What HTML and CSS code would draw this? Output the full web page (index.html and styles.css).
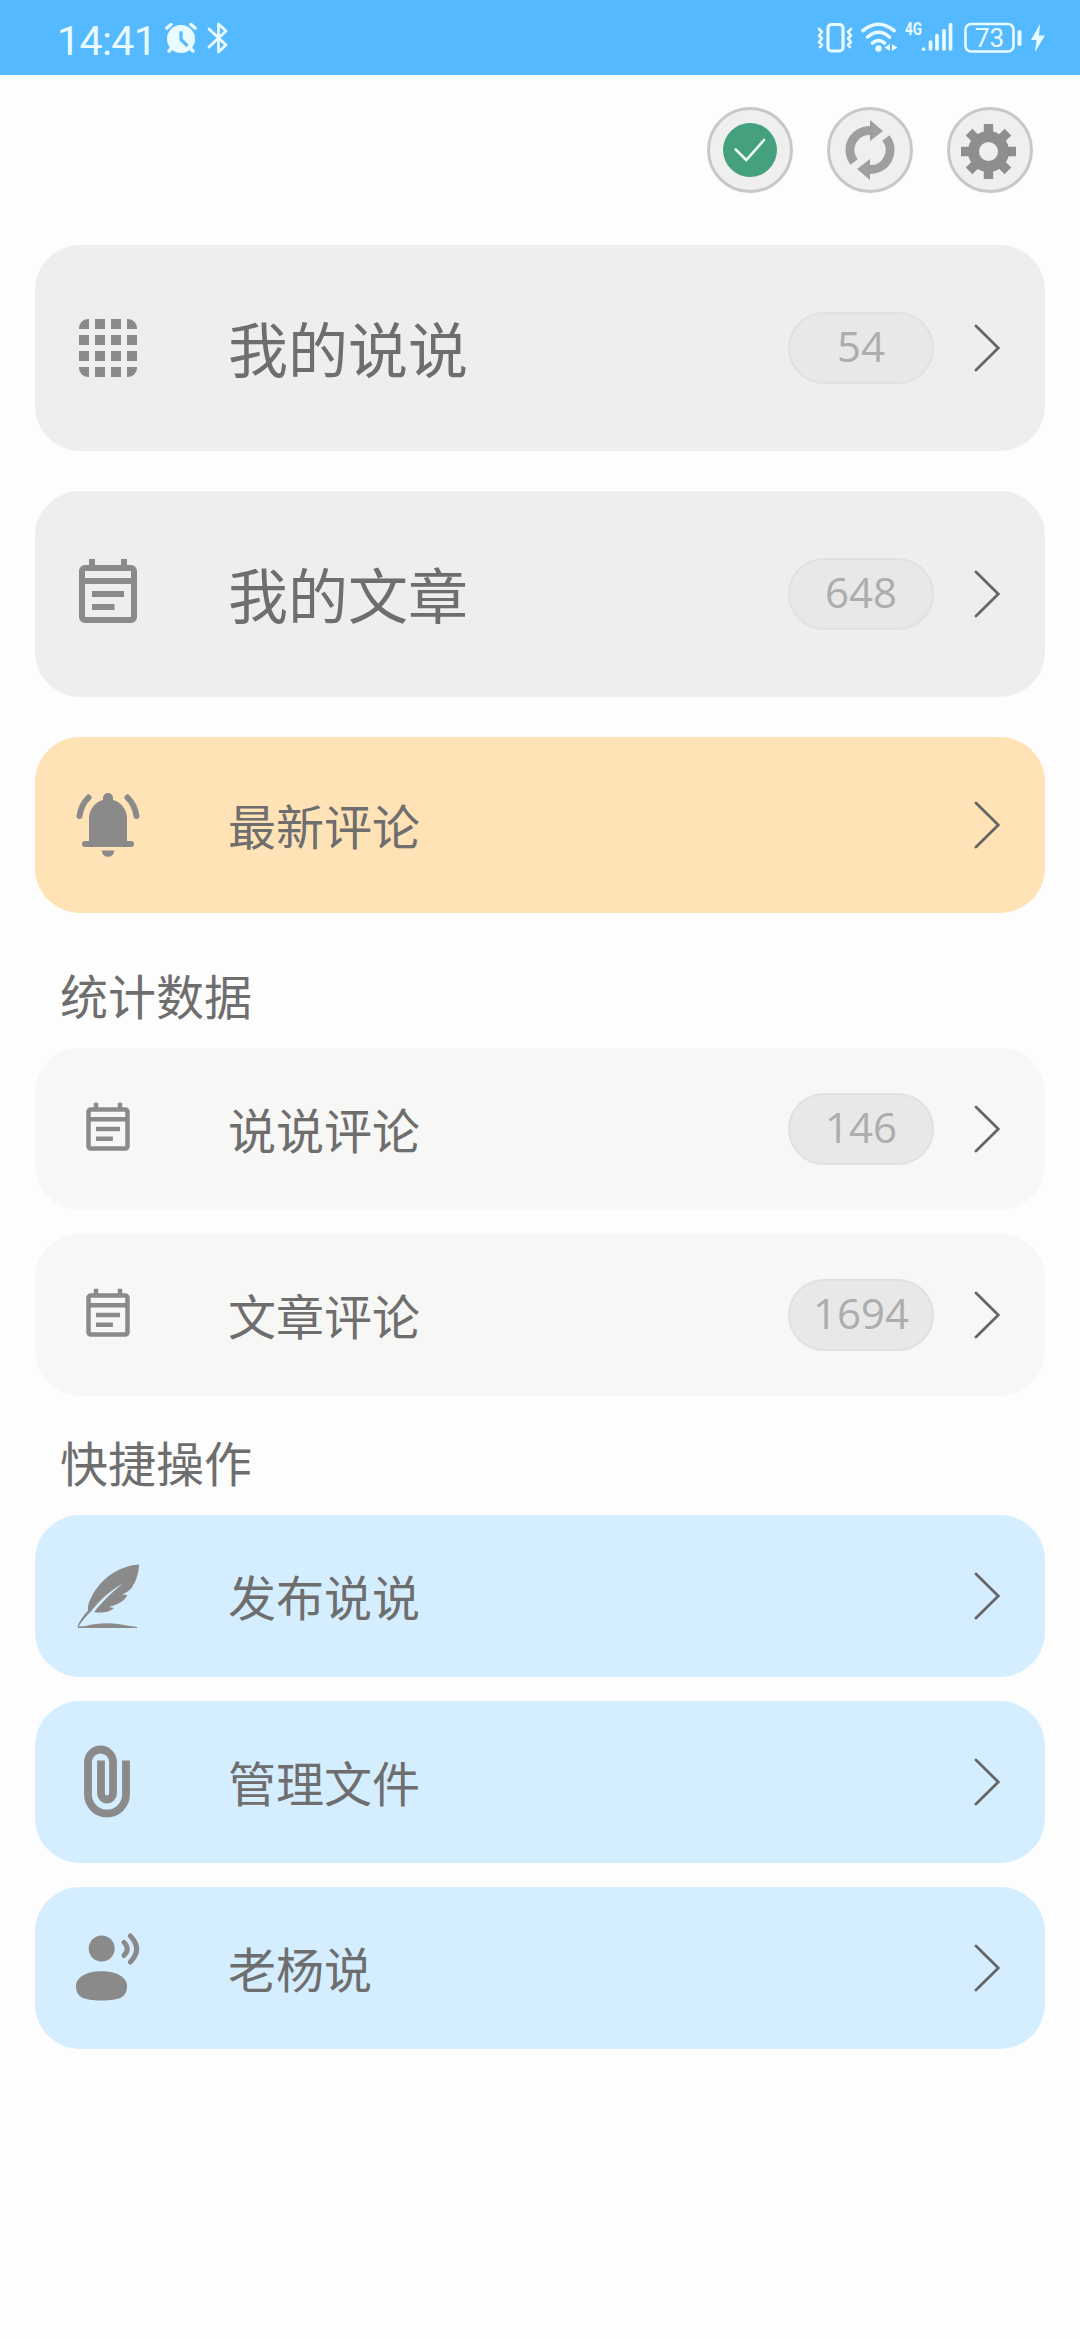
FILE: index.html
```html
<!DOCTYPE html>
<html lang="zh-CN">
    <head>
        <meta charset="UTF-8">
        <title>我的说说</title>
        <link rel="stylesheet" href="styles.css">
    </head>

    <body>
        <!-- shared icons -->
        <svg class="defs" width="0" height="0">
            <symbol id="note" viewBox="0 0 64 64" overflow="visible">
                <rect x="6" y="6" width="52" height="52" rx="3" fill="none" stroke="currentColor" stroke-width="6"/>
                <path d="M13 -3h6v8h-6zM45 -3h6v8h-6zM6 16h52v6H6zM16 29h32v6H16zM16 42h22.5v6H16z" fill="currentColor"/>
            </symbol>
            <symbol id="arrow" viewBox="0 0 26 48">
                <path d="M2 2L24.3 24L2 46" fill="none" stroke="currentColor" stroke-width="2.8" stroke-linecap="round"/>
            </symbol>
        </svg>

        <div class="status-bar">
            <span class="time">14:41</span>
            <svg class="alarm" width="32" height="32" viewBox="0 0 32 32">
                <circle cx="16" cy="17" r="14" fill="currentColor"/>
                <path d="M2 6L6 2.5M30 6L26 2.5M6 27L4 29M26 27L28 29" stroke="currentColor" stroke-width="3.5" stroke-linecap="round"/>
                <path d="M16 10.5V17.5L21.5 23" fill="none" stroke="#55b9ff" stroke-width="3.2" stroke-linecap="round"/>
            </svg>
            <svg class="bluetooth" width="22" height="34" viewBox="0 0 22 34">
                <path d="M2 8L19 24L11.5 31V3L19 10L2 26" fill="none" stroke="currentColor" stroke-width="2.8" stroke-linejoin="round" stroke-linecap="round"/>
            </svg>

            <div class="status-right">
                <svg width="36" height="32" viewBox="0 0 36 32">
                    <rect x="11" y="2.5" width="15" height="26.5" rx="3.5" fill="none" stroke="currentColor" stroke-width="3.2"/>
                    <path d="M2 7l3 3-3 3.5 3 3-3 3.5 3 3-2 2M34 7l-3 3 3 3.5-3 3 3 3.5-3 3 2 2" fill="none" stroke="currentColor" stroke-width="2.6" stroke-linecap="round" stroke-linejoin="round"/>
                </svg>
                <svg class="wifi" width="37" height="32" viewBox="0 0 37 32">
                    <path d="M2 8.5Q17.5 -4 33 8.5M6.5 15Q17.5 5.5 28.5 15M11.5 21Q17.5 16 23.5 21" fill="none" stroke="currentColor" stroke-width="3.6" stroke-linecap="round"/>
                    <circle cx="17.5" cy="26.5" r="3.2" fill="currentColor"/>
                    <path d="M29 22v7l-5.5 -3.5zM31 22v7l5.5 -3.5z" fill="currentColor"/>
                </svg>
                <svg class="signal" width="48" height="32" viewBox="0 0 48 32">
                    <text class="net" x="0" y="13" textLength="17" lengthAdjust="spacingAndGlyphs">4G</text>
                    <path d="M18.5 27v.2M25.5 27V20M32 27V13.5M39 27V8.5M45.5 27V2.5" stroke="currentColor" stroke-width="3.7" stroke-linecap="round"/>
                </svg>
                <svg class="battery" width="58" height="32" viewBox="0 0 58 32">
                    <rect x="1.5" y="2" width="48" height="27.5" rx="5.5" fill="none" stroke="currentColor" stroke-width="2.6"/>
                    <rect x="53.5" y="8" width="4" height="16" rx="2" fill="currentColor"/>
                    <text class="level" x="25.5" y="24.5" text-anchor="middle">73</text>
                </svg>
                <svg class="bolt" width="16" height="32" viewBox="0 0 16 32">
                    <path d="M10 2L1 18h5.5L5 30L15 13.5H9z" fill="currentColor"/>
                </svg>
            </div>
        </div>

        <div class="toolbar">
            <div class="tool">
                <svg width="60" height="60" viewBox="-30 -30 60 60">
                    <circle r="27" fill="#45a07e"/>
                    <path d="M-14.3 -.5L-3.7 10L14 -10" fill="none" stroke="#edfff6" stroke-width="2.6" stroke-linecap="round"/>
                </svg>
            </div>
            <div class="tool">
                <svg width="60" height="60" viewBox="-30 -30 60 60" fill="#9f9f9f">
                    <g id="half">
                        <path d="M-15.9 11.9A19.5 19.5 0 0 1 1 -19.5" fill="none" stroke="#9f9f9f" stroke-width="9"/>
                        <path d="M0 -30L13 -19L0 -9z"/>
                    </g>
                    <use href="#half" transform="rotate(180)"/>
                </svg>
            </div>
            <div class="tool">
                <svg width="60" height="60" viewBox="-28.5 -31.5 60 60" fill="#8e8e8e">
                    <circle r="15" fill="none" stroke="#8e8e8e" stroke-width="11"/>
                    <path id="teeth" d="M-4.7 -27.5h9.4v10h-9.4zM-4.7 17.5h9.4v10h-9.4zM-27.5 -4.7h10v9.4h-10zM17.5 -4.7h10v9.4h-10z"/>
                    <use href="#teeth" transform="rotate(45)"/>
                </svg>
            </div>
        </div>

        <div class="list">
            <div class="card big gray">
                <svg class="icon" viewBox="0 0 64 64">
                    <clipPath id="round"><rect x="3" y="3" width="58" height="58" rx="9"/></clipPath>
                    <path d="M3 8h58M3 24h58M3 40h58M3 56h58" stroke="currentColor" stroke-width="10" stroke-dasharray="10 6" clip-path="url(#round)"/>
                </svg>
                <span class="name">我的说说</span>
                <span class="count">54</span>
                <svg class="arrow"><use href="#arrow"/></svg>
            </div>

            <div class="card big gray">
                <svg class="icon"><use href="#note"/></svg>
                <span class="name">我的文章</span>
                <span class="count">648</span>
                <svg class="arrow"><use href="#arrow"/></svg>
            </div>

            <div class="card orange">
                <svg class="icon" viewBox="0 0 64 64" fill="currentColor">
                    <path d="M27 7V5a5 5 0 0 1 10 0v2A19 19 0 0 1 51 25v23h4a3 3 0 0 1 0 6H9a3 3 0 0 1 0 -6h4V25A19 19 0 0 1 27 7z"/>
                    <path d="M25.7 57.5h12.6a6.3 6.3 0 0 1 -12.6 0z"/>
                    <path d="M12.5 4.5Q5 12 3.5 23M51.5 4.5Q59 12 60.5 23" fill="none" stroke="currentColor" stroke-width="6" stroke-linecap="round"/>
                </svg>
                <span class="name">最新评论</span>
                <svg class="arrow"><use href="#arrow"/></svg>
            </div>
        </div>

        <h2 class="first">统计数据</h2>
        <div class="list small">
            <div class="card light">
                <svg class="icon mini"><use href="#note"/></svg>
                <span class="name">说说评论</span>
                <span class="count">146</span>
                <svg class="arrow"><use href="#arrow"/></svg>
            </div>

            <div class="card light">
                <svg class="icon mini"><use href="#note"/></svg>
                <span class="name">文章评论</span>
                <span class="count">1694</span>
                <svg class="arrow"><use href="#arrow"/></svg>
            </div>
        </div>

        <h2>快捷操作</h2>
        <div class="list small">
            <div class="card blue">
                <svg class="icon" viewBox="0 0 64 64" fill="currentColor">
                    <path d="M1.3 62.5C4 56 8 51 12 46.5C11.5 42 13 37 16 32C25 15 42 2 63 .5C63 8 60 18 55.5 24C53 27 50 29 46 30.5L51.5 31C49 36 44 40 33 43L38 44C34 48 26 49.5 18 48C27 37 34 30 47 19.5C33 27 22 38 15 47.5C10 52 6 57 2.5 62.5z"/>
                    <path d="M2 62.5L10 62Q14 60.5 20 60Q31 58.5 42 60Q48 61 54 62L61 63V64H2z"/>
                </svg>
                <span class="name">发布说说</span>
                <svg class="arrow"><use href="#arrow"/></svg>
            </div>

            <div class="card blue">
                <svg class="icon" viewBox="0 0 64 64">
                    <path d="M50 10.5V44.5A19 19 0 0 1 12 44.5V12A12.5 12.5 0 0 1 37 12V43.5A6 6 0 0 1 25 43.5V10.5" fill="none" stroke="currentColor" stroke-width="7.8"/>
                </svg>
                <span class="name">管理文件</span>
                <svg class="arrow"><use href="#arrow"/></svg>
            </div>

            <div class="card blue">
                <svg class="icon" viewBox="0 0 64 64" fill="currentColor">
                    <circle cx="25.7" cy="12.5" r="13"/>
                    <path d="M0 50C0 41 11 35.2 25.5 35.2S51 41 51 50C51 61 44 64.5 25.5 64.5S0 61 0 50z"/>
                    <path d="M48 6.5Q54.5 13 48 19.5M54.3 0Q67 13 54.3 26" fill="none" stroke="currentColor" stroke-width="5" stroke-linecap="round"/>
                </svg>
                <span class="name">老杨说</span>
                <svg class="arrow"><use href="#arrow"/></svg>
            </div>
        </div>
    </body>
</html>
```
FILE: styles.css
```css
* {
	margin: 0;
	padding: 0;
	box-sizing: border-box;
}

body {
	background: #fdfdfd;
	color: #6e6e6e;
	font-family: "Noto Sans CJK SC", sans-serif;
}

svg {
	display: block;
	flex: none;
	overflow: visible;
}

.defs {
	position: absolute;
}

/* status bar */
.status-bar {
	display: flex;
	align-items: center;
	height: 75px;
	padding: 0 34px 0 57px;
	background: #55b9ff;
	color: #e9fbff;
	font-family: Roboto, sans-serif;
}

.time {
	font-size: 41px;
	line-height: 40px;
	width: 108px;
	letter-spacing: -0.6px;
	padding-top: 6px;
}

.bluetooth {
	margin-left: 10px;
}

.status-right {
	display: flex;
	align-items: center;
	margin-left: auto;
}

.wifi {
	margin-left: 8px;
}

.signal {
	margin-left: 7px;
}

.battery {
	margin-left: 11px;
}

.bolt {
	margin-left: 8px;
}

.net {
	font-size: 18px;
	font-weight: bold;
	fill: currentColor;
}

.level {
	font-size: 26px;
	fill: currentColor;
}

/* round buttons */
.toolbar {
	display: flex;
	justify-content: flex-end;
	gap: 34px;
	height: 170px;
	padding: 32px 47px 0;
}

.tool {
	display: flex;
	align-items: center;
	justify-content: center;
	width: 86px;
	height: 86px;
	background: #efefef;
	border: 3px solid #c8c8c8;
	border-radius: 50%;
}

/* cards */
.list {
	display: flex;
	flex-direction: column;
	gap: 40px;
	margin: 0 35px;
}

.card {
	display: flex;
	align-items: center;
	height: 176px;
	padding: 0 45px 0 41px;
	border-radius: 45px;
	font-size: 48px;
}

.big {
	height: 206px;
	font-size: 60px;
}

.small {
	gap: 24px;
}

.small .card {
	height: 162px;
}

.gray {
	background: #eee;
}

.orange {
	background: #ffe2b6;
}

.light {
	background: #f7f7f5;
}

.blue {
	background: #d4edff;
}

.icon {
	width: 64px;
	height: 64px;
	color: #8a8a8a;
}

.mini {
	width: 48px;
	height: 48px;
	margin: 0 8px;
}

.name {
	flex: 1;
	margin-left: 88px;
	padding-bottom: 3px;
	line-height: 72px;
}

.count {
	width: 146px;
	height: 72px;
	margin-right: 40px;
	background: #e8e8e8;
	border: 2px solid #e1e1e1;
	border-radius: 36px;
	color: #adadad;
	font-family: "Open Sans", sans-serif;
	font-size: 42px;
	line-height: 64px;
	text-align: center;
}

.arrow {
	width: 26px;
	height: 48px;
	color: #666;
}

h2 {
	height: 119px;
	padding: 29px 60px 0;
	font-size: 48px;
	font-weight: normal;
	line-height: 72px;
}

.first {
	height: 135px;
	padding-top: 45px;
}
```
